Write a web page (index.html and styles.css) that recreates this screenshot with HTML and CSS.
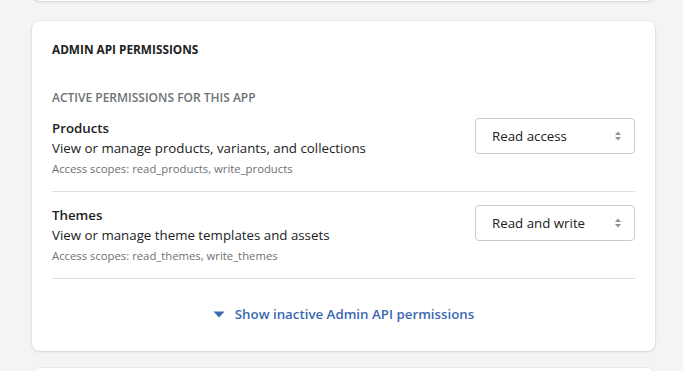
FILE: index.html
```html
<!DOCTYPE html>
<html lang="en">

<head>
  <meta charset="UTF-8" />
  <meta name="viewport" content="width=device-width, initial-scale=1.0" />
  <title>Admin API permissions</title>
  <link rel="stylesheet" href="styles.css">
</head>

<body>
  <div class="page">
    <!-- Card above, scrolled out of view -->
    <div class="card card-prev"></div>

    <!-- Permissions card -->
    <div class="card">
      <h2 class="card-title">Admin API permissions</h2>

      <h3 class="section-title">Active permissions for this app</h3>

      <div class="perm">
        <div class="perm-info">
          <div class="perm-name">Products</div>
          <div class="perm-desc">View or manage products, variants, and collections</div>
          <div class="perm-scopes">Access scopes: read_products, write_products</div>
        </div>
        <div class="select">
          <span>Read access</span>
          <svg class="select-arrows" viewBox="0 0 8 12" width="8" height="12">
            <path d="M4 1.5 L7 5 H1 Z" />
            <path d="M4 10.5 L7 7 H1 Z" />
          </svg>
        </div>
      </div>

      <div class="perm">
        <div class="perm-info">
          <div class="perm-name">Themes</div>
          <div class="perm-desc">View or manage theme templates and assets</div>
          <div class="perm-scopes">Access scopes: read_themes, write_themes</div>
        </div>
        <div class="select">
          <span>Read and write</span>
          <svg class="select-arrows" viewBox="0 0 8 12" width="8" height="12">
            <path d="M4 1.5 L7 5 H1 Z" />
            <path d="M4 10.5 L7 7 H1 Z" />
          </svg>
        </div>
      </div>

      <div class="more">
        <a href="#" class="more-link">
          <svg viewBox="0 0 12 7" width="12" height="7">
            <path d="M0.5 0.5 H11.5 L6 6.5 Z" />
          </svg>
          Show inactive Admin API permissions
        </a>
      </div>
    </div>

    <div class="card card-next"></div>
  </div>
</body>

</html>
```

FILE: styles.css
```css
* {
  margin: 0;
  padding: 0;
  box-sizing: border-box;
}

body {
  background-color: #f3f4f5;
  font-family: "Open Sans", "Noto Sans", sans-serif;
  font-size: 13.3px;
  color: #202223;
  overflow: hidden;
}

.page {
  padding: 0 28px 0 32px;
  display: flex;
  flex-direction: column;
  gap: 20px;
}

/* Cards */
.card {
  background-color: #fff;
  border-radius: 8px;
  box-shadow: 0 0 0 1px rgba(63, 63, 68, 0.04), 0 1px 3px 0 rgba(63, 63, 68, 0.14);
  padding: 20px 20px 21px;
}

.card-prev {
  height: 20px;
  margin-top: -19px;
  padding: 0;
}

.card-next {
  height: 40px;
  margin-top: -3px;
  padding: 0;
}

.card-title {
  font-size: 11.8px;
  font-weight: 700;
  line-height: 16px;
  text-transform: uppercase;
}

.section-title {
  margin-top: 33px;
  font-size: 12px;
  font-weight: 600;
  line-height: 16px;
  color: #6d7175;
  text-transform: uppercase;
}

/* Permission rows */
.perm {
  display: flex;
  justify-content: space-between;
  align-items: flex-start;
  padding: 12px 0 14px;
  border-bottom: 1px solid #dddfe1;
}

.perm + .perm {
  padding-top: 13px;
}

.perm-name {
  font-weight: 600;
  line-height: 20px;
}

.perm-desc {
  line-height: 20px;
}

.perm-scopes {
  margin-top: 3px;
  font-size: 11.3px;
  line-height: 16px;
  color: #6d7175;
}

.select {
  width: 160px;
  height: 36px;
  display: flex;
  align-items: center;
  justify-content: space-between;
  padding: 0 12px 0 16px;
  border: 1px solid #c9cccf;
  border-radius: 4px;
  line-height: 20px;
}

.select-arrows {
  fill: #8c9196;
}

/* Show inactive */
.more {
  display: flex;
  justify-content: center;
  padding: 25px 0 6px;
}

.more-link {
  display: flex;
  align-items: center;
  gap: 10px;
  color: #3b68b1;
  font-weight: 600;
  line-height: 20px;
  text-decoration: none;
}

.more-link svg {
  fill: #3b68b1;
}
```
